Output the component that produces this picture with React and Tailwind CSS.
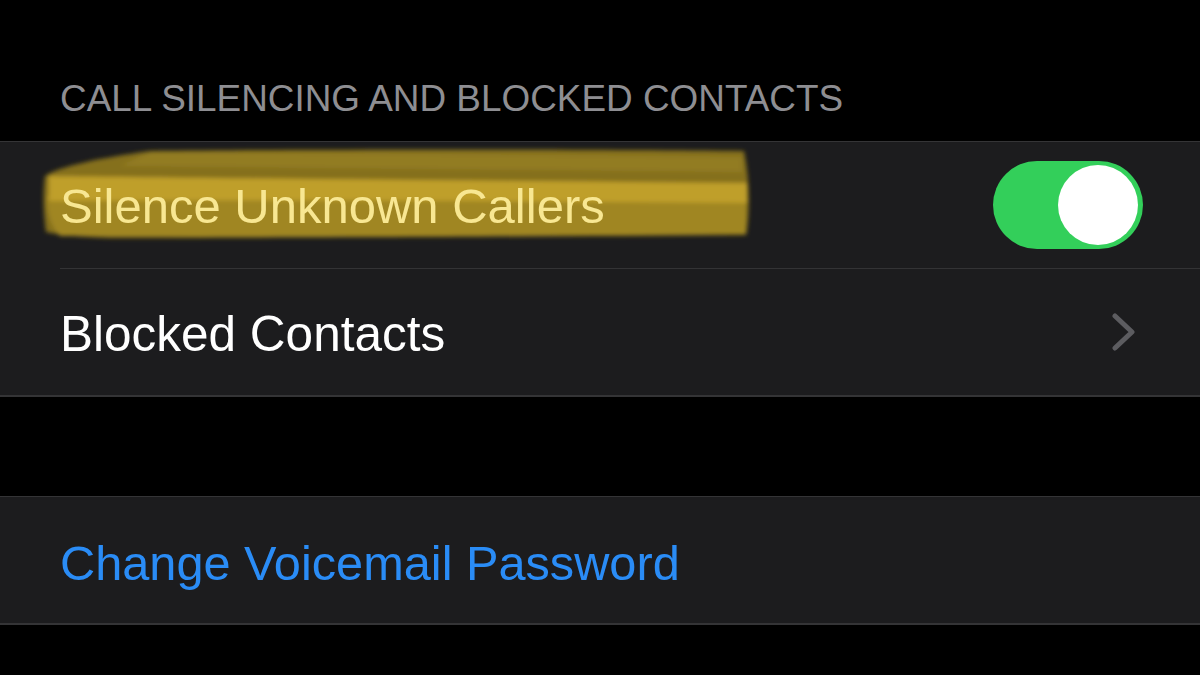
import React from "react";

const font = { fontFamily: '"Liberation Sans", Arial, sans-serif' };

// rough highlighter marker drawn over the first row
const Highlight = () => (
  <svg
    className="absolute left-0 top-0 pointer-events-none"
    width="1200"
    height="126"
    viewBox="0 142 1200 126"
  >
    <defs>
      <filter id="soft" x="-5%" y="-20%" width="110%" height="140%">
        <feGaussianBlur stdDeviation="2" />
      </filter>
    </defs>
    <g filter="url(#soft)">
      <path
        d="M45,176 C60,166 100,158 150,151 C300,149 600,149 744,151 C750,180 750,215 746,235 C500,237 250,238 110,238 C80,237 58,235 46,232 C43,210 43,190 45,176 Z"
        fill="#85701f"
      />
      <path
        d="M47,196 C250,198 500,200 746,202 L746,234 C500,236 250,237 60,236 C50,226 47,210 47,196 Z"
        fill="#a08624"
      />
      <path
        d="M49,176 C200,178 500,181 747,183 L747,203 C500,201 250,199 49,201 Z"
        fill="#bf9f2a"
      />
      <path
        d="M150,152 C350,153 550,155 742,157 L742,172 C550,170 350,168 120,166 Z"
        fill="#927b22"
      />
    </g>
  </svg>
);

const Toggle = () => (
  <div className="w-[150px] h-[88px] rounded-full bg-[#33cf5a] flex items-center justify-end pr-[5px]">
    <div className="w-[80px] h-[80px] rounded-full bg-white" />
  </div>
);

const Chevron = () => (
  <svg width="26" height="38" viewBox="0 0 26 38" fill="none">
    <path
      d="M4 3 L21 19 L4 35"
      stroke="#5c5c60"
      strokeWidth="5"
      strokeLinecap="round"
      strokeLinejoin="round"
    />
  </svg>
);

export default function App() {
  return (
    <div className="w-[1200px] h-[675px] bg-black overflow-hidden" style={font}>
      {/* section header */}
      <div className="h-[141px] pt-[81px] pl-[60px]">
        <p className="text-[36.9px] leading-none text-[#8e8e92]">
          CALL SILENCING AND BLOCKED CONTACTS
        </p>
      </div>

      {/* call silencing group */}
      <div className="bg-[#1c1c1e] border-t border-b-2 border-[#343436]">
        <div className="relative h-[126px] pl-[60px] pr-[57px] flex items-center justify-between">
          <Highlight />
          <span className="relative text-[49px] leading-none text-[#f8e792] mt-[2px]">
            Silence Unknown Callers
          </span>
          <Toggle />
        </div>
        <div className="ml-[60px] h-px bg-[#333335]" />
        <div className="h-[126px] pl-[60px] pr-[63px] flex items-center justify-between">
          <span className="text-[49.5px] leading-none text-white mt-[4px]">
            Blocked Contacts
          </span>
          <Chevron />
        </div>
      </div>

      <div className="h-[99px]" />

      {/* voicemail group */}
      <div className="bg-[#1c1c1e] border-t border-b-2 border-[#343436]">
        <div className="h-[126px] pl-[60px] flex items-center">
          <span className="text-[48.7px] leading-none text-[#2a8cf6] mt-[6px]">
            Change Voicemail Password
          </span>
        </div>
      </div>
    </div>
  );
}
